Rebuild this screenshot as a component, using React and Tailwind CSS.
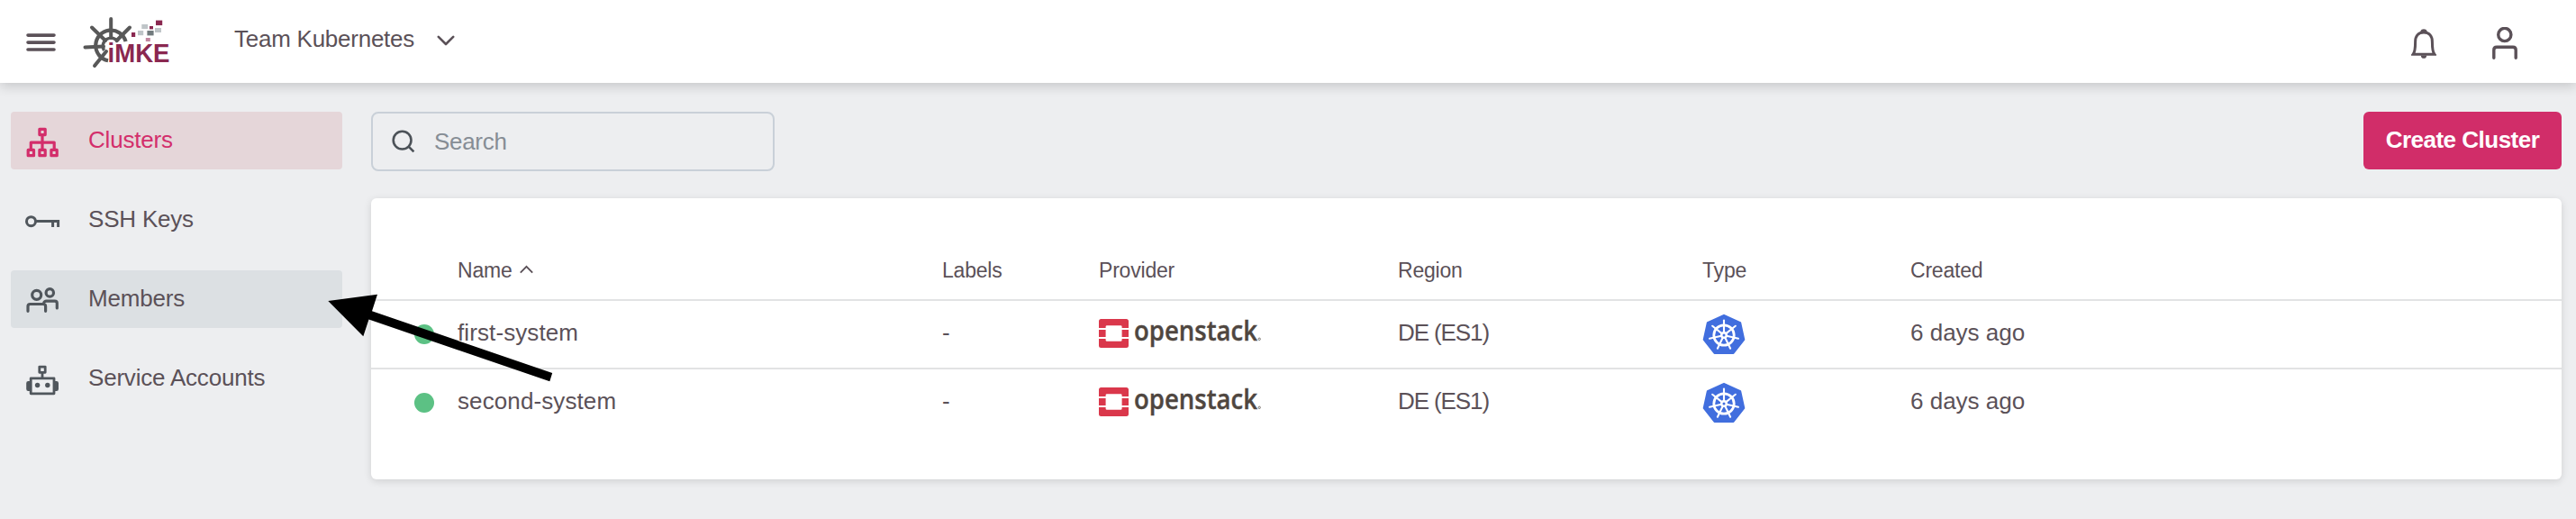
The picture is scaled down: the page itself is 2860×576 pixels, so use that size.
const clusters = [
  { name: 'first-system', labels: '-', region: 'DE (ES1)', created: '6 days ago' },
  { name: 'second-system', labels: '-', region: 'DE (ES1)', created: '6 days ago' },
];

const columns = 'grid grid-cols-[96px_538px_174px_332px_338px_231px_1fr]';

function MenuIcon() {
  return (
    <svg className="h-5 w-[33px] shrink-0" viewBox="0 0 33 20" fill="none" stroke="#5b5158" strokeWidth="3.6" strokeLinecap="round">
      <path d="M2 2.1H31M2 10.1H31M2 18H31" />
    </svg>
  );
}

function Logo() {
  return (
    <svg className="h-[70px] w-[100px] shrink-0 overflow-visible" viewBox="92 12 100 70" fill="none">
      <g stroke="#585858" strokeWidth="4" strokeLinecap="round">
        <path d="M120 67.2A17 17 0 1 1 139.6 46" strokeLinecap="butt" strokeWidth="4.2" />
        <path d="M115.5 56A9 9 0 1 1 131 46.5" strokeLinecap="butt" strokeWidth="3.4" />
        <path d="M123.2 21V42M94.5 52.5L115 51.5M102 30.5L117 45M144 30.5L129.5 45M105 73L118 57" />
      </g>
      <g fill="#8a2850">
        <rect x="146" y="36" width="4.2" height="5" />
        <rect x="166" y="29" width="4" height="3.4" />
        <rect x="173" y="22.6" width="7.2" height="5.5" />
      </g>
      <g fill="#bfc5c8">
        <rect x="153" y="34" width="6.2" height="5.2" />
        <rect x="157.3" y="27" width="6.8" height="5.1" />
        <rect x="172" y="31" width="7" height="5" />
      </g>
      <rect x="163.4" y="34" width="7.2" height="5.4" fill="#727b7e" />
      <rect x="161.8" y="42" width="5" height="4" fill="#c287a0" />
      <text x="119.5" y="69" fill="#8a2850" fontFamily="Liberation Sans, sans-serif" fontWeight="700" fontSize="30" textLength="69" lengthAdjust="spacingAndGlyphs">iMKE</text>
    </svg>
  );
}

function BellIcon() {
  return (
    <svg className="h-[34px] w-7 shrink-0" viewBox="0 0 28 34" fill="none" stroke="#5b5158" strokeWidth="3">
      <path d="M2.2 28.2C4.3 25.5 4.6 21 4.6 14.5C4.6 8 8 4 14 4C20 4 23.4 8 23.4 14.5C23.4 21 23.7 25.5 25.8 28.2Z" />
      <path fill="#5b5158" stroke="none" d="M10.4 4.5V2.2Q11.2.2 14 .2T17.6 2.2V4.5ZM10.8 29.4H17.2Q17 32.8 14 32.8T10.8 29.4Z" />
    </svg>
  );
}

function UserIcon() {
  return (
    <svg className="h-9 w-7 shrink-0" viewBox="0 0 28 36" fill="none" stroke="#5b5158" strokeWidth="3.4" strokeLinecap="round">
      <circle cx="13.8" cy="8.5" r="7.1" />
      <path d="M1.8 34.2V25.5Q1.8 22.2 5 22.2H23Q26.2 22.2 26.2 25.5V34.2" />
    </svg>
  );
}

function ClustersIcon() {
  return (
    <svg className="h-[34px] w-10" viewBox="27 140.5 40 34" fill="none" stroke="#d32e6b" strokeWidth="3.2" strokeLinejoin="round">
      <path d="M43.9 142.8h6.3v6.3h-6.3zM31.2 165.9h6.3v6.3h-6.3zM43.9 165.9h6.3v6.3h-6.3zM56.9 165.9h6.3v6.3h-6.3z" />
      <path d="M47 149V165M34.3 165V157.6H60.2V165" />
    </svg>
  );
}

function KeyIcon() {
  return (
    <svg className="h-[34px] w-10" viewBox="27 229 40 34" fill="none" stroke="#50565c" strokeWidth="3">
      <circle cx="34.5" cy="245.7" r="5" />
      <path d="M39.5 245.5H64.6V252M58.6 246V252" />
    </svg>
  );
}

function MembersIcon() {
  return (
    <svg className="h-[34px] w-10" viewBox="27 316.5 40 34" fill="none" stroke="#50565c" strokeWidth="3.2" strokeLinecap="round">
      <circle cx="40.7" cy="326.8" r="5" />
      <circle cx="55.3" cy="324.4" r="4.2" />
      <path d="M31 344.8V339.5Q31 337 33.5 337H48Q50.6 337 50.6 339.5V344.8M48.6 336Q49.3 333.6 51.5 333.6H60.8Q63.3 333.6 63.3 336.1V341.4" />
    </svg>
  );
}

function RobotIcon() {
  return (
    <svg className="h-[34px] w-10" viewBox="27 404.5 40 34" fill="none" stroke="#50565c" strokeWidth="2.8">
      <path d="M43.8 406.6h6.4v6.2h-6.4zM47 413V419M34.2 419.3H60V436.3H34.2z" strokeLinejoin="round" />
      <path fill="#50565c" stroke="none" d="M33.5 422.6V433.4H31.4Q29.2 433.4 29.2 431.2V424.8Q29.2 422.6 31.4 422.6ZM61 422.6V433.4H62.8Q65 433.4 65 431.2V424.8Q65 422.6 62.8 422.6Z" />
      <circle cx="41.6" cy="427" r="2.7" fill="#50565c" stroke="none" />
      <circle cx="52.8" cy="427" r="2.7" fill="#50565c" stroke="none" />
    </svg>
  );
}

function OpenStackLogo() {
  return (
    <svg className="block h-[52px] w-[184px] overflow-visible" viewBox="0 -6 184 52">
      <path fill="#da374b" d="M0 14V6.5Q0 4 2.5 4H30.4Q33 4 33 6.5V14H25.6V12.6Q25.6 11.2 24.2 11.2H9Q7.6 11.2 7.6 12.6V14ZM0 15.9H7.6V24.1H0ZM25.6 15.9H33V24.1H25.6ZM0 26H7.6V27.4Q7.6 28.8 9 28.8H24.2Q25.6 28.8 25.6 27.4V26H33V33.5Q33 36 30.4 36H2.5Q0 36 0 33.5Z" />
      <text x="39" y="28" fill="#4f4640" stroke="#4f4640" strokeWidth=".4" fontFamily="Open Sans, sans-serif" fontWeight="600" fontSize="31" textLength="137" lengthAdjust="spacingAndGlyphs">openstack</text>
      <circle cx="178.2" cy="26.3" r="1.2" fill="none" stroke="#7a746f" strokeWidth="1" />
    </svg>
  );
}

function KubernetesIcon() {
  const spokes = [0, 1, 2, 3, 4, 5, 6];
  return (
    <svg className="block h-[46px] w-12" viewBox="0 0 48 46">
      <path fill="#416ede" stroke="#416ede" strokeWidth="2" strokeLinejoin="round" d="M24 1.8L42.2 10.2L46.3 29L34.5 44H13.5L1.7 29L5.8 10.2Z" />
      <g stroke="#fff" fill="none" strokeLinecap="round">
        <circle cx="24" cy="24" r="11.2" strokeWidth="2.8" />
        {spokes.map((i) => (
          <path key={i} d="M24 21V7.6" strokeWidth="2.1" transform={`rotate(${(i * 360) / 7} 24 24)`} />
        ))}
      </g>
      <circle cx="24" cy="24" r="4" fill="#fff" />
      <circle cx="24" cy="24" r="1.5" fill="#416ede" />
    </svg>
  );
}

const nav = [
  { label: 'Clusters', Icon: ClustersIcon, style: 'bg-[#e5d6d9] text-[#d32e6b]' },
  { label: 'SSH Keys', Icon: KeyIcon, style: '' },
  { label: 'Members', Icon: MembersIcon, style: 'bg-[#dce0e3]' },
  { label: 'Service Accounts', Icon: RobotIcon, style: '' },
];

function Header() {
  return (
    <header className="relative flex h-[92px] items-center bg-white pr-[65px] pl-[29px] shadow-[0_4px_12px_rgba(0,0,0,0.16)]">
      <div className="mt-[2px] flex">
        <MenuIcon />
      </div>
      <div className="ml-[30px] flex pt-[2px]">
        <Logo />
      </div>
      <button className="ml-[68px] flex items-center gap-[25px] pb-[6px]">
        <span className="tracking-[-0.25px]">Team Kubernetes</span>
        <svg className="mt-[4px] h-3 w-5" viewBox="0 0 20 12" fill="none" stroke="#5b5158" strokeWidth="2.6" strokeLinecap="round" strokeLinejoin="round">
          <path d="M1.8 1.8L10 10L18.2 1.8" />
        </svg>
      </button>
      <div className="ml-auto flex items-end gap-[62px] pt-[4px]">
        <BellIcon />
        <UserIcon />
      </div>
    </header>
  );
}

function ClusterTable() {
  return (
    <section className="mt-[30px] h-[312px] rounded-md bg-white pt-[46px] shadow-[0_2px_8px_rgba(0,0,0,0.13)]">
      <div className={`${columns} h-[68px] items-center border-b-2 border-[#e2e3e4] pt-[1px] text-[23px] tracking-[-0.2px]`}>
        <span />
        <span className="flex items-center gap-[8px]">
          Name
          <svg className="mb-[2px] h-[10px] w-[15px]" viewBox="0 0 15 10" fill="none" stroke="#5b5158" strokeWidth="1.9">
            <path d="M.8 8.6L7.5 1.9L14.2 8.6" />
          </svg>
        </span>
        <span>Labels</span>
        <span>Provider</span>
        <span>Region</span>
        <span>Type</span>
        <span>Created</span>
      </div>
      {clusters.map((c) => (
        <div key={c.name} className={`${columns} h-[76px] items-center border-b-2 border-[#e2e3e4] last:border-transparent`}>
          <span className="ml-12 h-[22px] w-[22px] rounded-full bg-[#5cc184]" />
          <span className="pb-[5px] tracking-[0.1px]">{c.name}</span>
          <span className="pb-[5px]">{c.labels}</span>
          <span className="pb-[2px]">
            <OpenStackLogo />
          </span>
          <span className="pb-[5px] tracking-[-1.1px]">{c.region}</span>
          <span>
            <KubernetesIcon />
          </span>
          <span className="pb-[5px]">{c.created}</span>
        </div>
      ))}
    </section>
  );
}

export default function App() {
  return (
    <div className="relative h-[576px] w-[2860px] overflow-hidden bg-[#edeef0] font-['Liberation_Sans',Arial,sans-serif] text-[26px] leading-[32px] text-[#5b5158]">
      <Header />
      <div className="flex pt-8 pr-4 pl-3">
        <nav className="flex w-[368px] shrink-0 flex-col gap-6">
          {nav.map(({ label, Icon, style }) => (
            <a key={label} className={`flex h-16 items-center rounded pl-[15px] ${style}`}>
              <span className="pt-[4px]">
                <Icon />
              </span>
              <span className="ml-[31px] pb-[2px] tracking-[-0.2px]">{label}</span>
            </a>
          ))}
        </nav>
        <main className="ml-8 flex-1">
          <div className="flex items-start justify-between">
            <div className="flex h-[66px] w-[448px] items-center rounded-lg border-2 border-[#c9d0d8] pl-[20px]">
              <svg className="h-7 w-7" viewBox="0 0 28 28" fill="none" stroke="#4c5258" strokeWidth="2.6">
                <circle cx="12.6" cy="12.6" r="9.9" />
                <path d="M19.6 19.6L25.4 25.4" />
              </svg>
              <span className="ml-[20px] text-[#868d95] tracking-[-0.3px]">Search</span>
            </div>
            <button className="h-16 w-[220px] rounded-md bg-[#d12d69] pb-[3px] text-[26px] font-bold tracking-[-0.5px] text-white">Create Cluster</button>
          </div>
          <ClusterTable />
        </main>
      </div>
      <svg className="absolute top-[320px] left-[360px] h-[110px] w-[260px]" viewBox="360 320 260 110">
        <path d="M364.3 334L419 326.7L413 345.3L613.2 414L610.3 423.2L409.5 354.5L403.3 373.3Z" />
      </svg>
    </div>
  );
}
